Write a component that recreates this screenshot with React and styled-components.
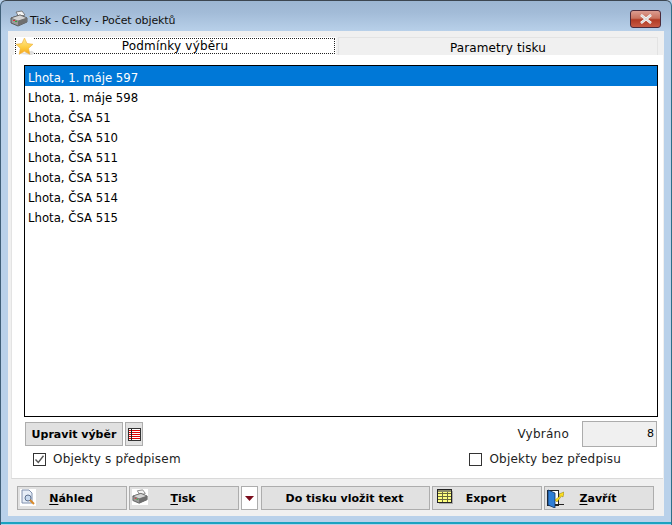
import styled, { createGlobalStyle } from "styled-components";

const Global = createGlobalStyle`
  html, body { margin: 0; padding: 0; background: #b9d1ea; }
  * { box-sizing: border-box; }
`;

const items = [
  "Lhota, 1. máje 597",
  "Lhota, 1. máje 598",
  "Lhota, ČSA 51",
  "Lhota, ČSA 510",
  "Lhota, ČSA 511",
  "Lhota, ČSA 513",
  "Lhota, ČSA 514",
  "Lhota, ČSA 515",
];

const PrinterIcon = ({ size = 18 }) => (
  <svg width={size} height={size} viewBox="0 0 18 18">
    <path d="M6 2 L12 1 L15 5 L9 7 Z" fill="#f4f4f4" stroke="#666" strokeWidth="0.8" />
    <path d="M1 8 L10 5 L17 8 L17 12 L8 16 L1 13 Z" fill="#9a9a9a" stroke="#444" strokeWidth="0.8" />
    <path d="M1 8 L8 11 L17 8 L10 5 Z" fill="#d4d4d4" stroke="#555" strokeWidth="0.6" />
    <path d="M8 11 L8 16 L17 12 L17 8 Z" fill="#6f6f6f" />
    <rect x="3" y="10" width="2" height="1" fill="#d33" />
    <rect x="5" y="11" width="2" height="1" fill="#3a3" />
  </svg>
);

const StarIcon = () => (
  <svg width="18" height="19" viewBox="0 0 17 18">
    <defs>
      <linearGradient id="star" x1="0" y1="0" x2="0" y2="1">
        <stop offset="0" stopColor="#ffec9a" />
        <stop offset="0.6" stopColor="#fdcb3e" />
        <stop offset="1" stopColor="#f5a21c" />
      </linearGradient>
    </defs>
    <path d="M3 16 L15 17 L18 15 L15 13 Z" fill="#dedede" />
    <path d="M8 1 L10.4 6.2 L16 6.9 L11.9 10.7 L13 16.4 L8 13.6 L3 16.4 L4.1 10.7 L0 6.9 L5.6 6.2 Z" fill="url(#star)" stroke="#eeb03a" strokeWidth="0.6" />
  </svg>
);

const PreviewIcon = () => (
  <svg width="16" height="17" viewBox="0 0 16 17">
    <path d="M2 1 H9 L12 4 V14 H2 Z" fill="#e6edf7" stroke="#8090ad" />
    <circle cx="8" cy="9" r="3" fill="#c6d8ee" stroke="#5d6f8e" />
    <path d="M10 11 L14 15" stroke="#d88a2a" strokeWidth="2" />
  </svg>
);

const TriangleIcon = () => (
  <svg width="9" height="5" viewBox="0 0 9 5">
    <path d="M0 0 H9 L4.5 5 Z" fill="#7a0c1c" />
  </svg>
);

const ListIcon = () => (
  <svg width="13" height="13" viewBox="0 0 13 13" shapeRendering="crispEdges">
    <rect x="0.5" y="0.5" width="12" height="12" fill="#fff" stroke="#333" />
    <path d="M1 2.5 H12 M1 4.5 H12 M1 6.5 H12 M1 8.5 H12 M1 10.5 H12" stroke="#e00000" strokeWidth="1" />
    <path d="M3.5 1 V12" stroke="#222" strokeWidth="1" />
  </svg>
);

const GridIcon = () => (
  <svg width="16" height="15" viewBox="0 0 16 15" shapeRendering="crispEdges">
    <rect x="2" y="2" width="14" height="13" fill="#aaa" />
    <rect x="0.5" y="0.5" width="14" height="13" fill="#ffff80" stroke="#222" />
    <path d="M1 4.5 H14 M1 7.5 H14 M1 10.5 H14 M5 1 V13 M10 1 V13" stroke="#6a6a3c" strokeWidth="1" />
    <rect x="1" y="1" width="13" height="2" fill="#8d8d6a" />
  </svg>
);

const DoorIcon = () => (
  <svg width="17" height="19" viewBox="0 0 17 19">
    <rect x="0.5" y="1.5" width="11" height="15" fill="#fff" stroke="#222" />
    <path d="M1 1 L8 4 V19 L1 16 Z" fill="#2f7fd6" stroke="#12315c" strokeWidth="0.8" />
    <path d="M8 11 L13 7 L12 5 L17 3 L16 8 L14.5 7 L10 13 Z" fill="#ffe020" stroke="#8a7a00" strokeWidth="0.5" />
    <path d="M8 15.5 H17" stroke="#222" strokeWidth="1" />
  </svg>
);

const CheckMark = () => (
  <svg width="11" height="11" viewBox="0 0 11 11">
    <path d="M1.5 5.5 L4.3 8.5 L9.5 1.8" fill="none" stroke="#555" strokeWidth="1.4" />
  </svg>
);

const CloseGlyph = () => (
  <svg width="14" height="10" viewBox="0 0 14 10">
    <path d="M2 1 L12 9 M12 1 L2 9" stroke="#fff" strokeWidth="2.6" />
    <path d="M2 1 L12 9 M12 1 L2 9" stroke="#d8d8d8" strokeWidth="1.2" />
  </svg>
);

const Underlined = styled.span`
  text-decoration: underline;
  text-underline-offset: 2px;
`;

const App = () => (
  <>
    <Global />
    <Window>
      <TitleBar>
        <TitleIcon>
          <PrinterIcon />
        </TitleIcon>
        <TitleText>Tisk - Celky - Počet objektů</TitleText>
        <CloseButton>
          <CloseGlyph />
        </CloseButton>
      </TitleBar>
      <Client>
        <TabRow>
          <ActiveTab>
            <TabStar>
              <StarIcon />
            </TabStar>
            <ActiveLabel>Podmínky výběru</ActiveLabel>
          </ActiveTab>
          <Tab>Parametry tisku</Tab>
        </TabRow>
        <Panel>
          <ListBox>
            {items.map((item, i) => (
              <ListRow key={item} $selected={i === 0}>
                {item}
              </ListRow>
            ))}
          </ListBox>
          <SelectRow>
            <SelectGroup>
              <FlatButton $width={98}>Upravit výběr</FlatButton>
              <IconButton>
                <ListIcon />
              </IconButton>
            </SelectGroup>
            <CountGroup>
              <CountLabel>Vybráno</CountLabel>
              <CountBox>8</CountBox>
            </CountGroup>
          </SelectRow>
          <CheckRow>
            <CheckItem>
              <CheckBox>
                <CheckMark />
              </CheckBox>
              Objekty s předpisem
            </CheckItem>
            <CheckItem>
              <CheckBox />
              Objekty bez předpisu
            </CheckItem>
          </CheckRow>
        </Panel>
        <ButtonBar>
          <BarButton $width={110}>
            <BarIcon $left={2} $white>
              <PreviewIcon />
            </BarIcon>
            <BarLabel><Underlined>N</Underlined>áhled</BarLabel>
          </BarButton>
          <BarButton $width={110}>
            <BarIcon $left={2} $white>
              <PrinterIcon size={16} />
            </BarIcon>
            <BarLabel><Underlined>T</Underlined>isk</BarLabel>
          </BarButton>
          <ArrowButton>
            <TriangleIcon />
          </ArrowButton>
          <BarButton $width={169} $gap={1}>
            <BarLabel>Do tisku vložit text</BarLabel>
          </BarButton>
          <BarButton $width={110}>
            <BarIcon $left={4}>
              <GridIcon />
            </BarIcon>
            <BarLabel>Export</BarLabel>
          </BarButton>
          <BarButton $width={110}>
            <BarIcon $left={2}>
              <DoorIcon />
            </BarIcon>
            <BarLabel><Underlined>Z</Underlined>avřít</BarLabel>
          </BarButton>
        </ButtonBar>
      </Client>
      <BottomEdge />
    </Window>
  </>
);

export default App;

const Window = styled.div`
  width: 672px;
  height: 525px;
  display: flex;
  flex-direction: column;
  overflow: hidden;
  border-radius: 6px 6px 0 0;
  border-top: 1px solid #3c4650;
  border-left: 1px solid #3f5f78;
  border-right: 1px solid #2f6f88;
  background: linear-gradient(to bottom, #9cb6d2 0, #a3bcd8 12px, #b9d1ea 31px);
  font-family: "DejaVu Sans", "Liberation Sans", sans-serif;
  font-size: 12px;
  color: #000;
`;

const TitleBar = styled.div`
  height: 30px;
  flex: none;
  display: flex;
  align-items: center;
  padding: 0 7px 0 9px;
`;

const TitleIcon = styled.div`
  width: 20px;
  display: flex;
  margin-top: 6px;
`;

const TitleText = styled.div`
  flex: 1;
  margin-top: 8px;
  font-size: 11px;
  letter-spacing: -0.1px;
  color: #111;
`;

const CloseButton = styled.div`
  width: 31px;
  height: 18px;
  margin: 6px 3px 0 0;
  display: flex;
  align-items: center;
  justify-content: center;
  border: 1px solid #4b2a3a;
  border-radius: 3px;
  background: linear-gradient(to bottom, #dc9c90 0, #c9735f 45%, #b13a24 55%, #c65a44 100%);
`;

const Client = styled.div`
  margin: 0 7px;
  height: 485px;
  flex: none;
  background: #f0f0f0;
  display: flex;
  flex-direction: column;
  padding: 6px 0 0 3px;
`;

const TabRow = styled.div`
  height: 18px;
  flex: none;
  display: flex;
  gap: 2px;
  padding-left: 3px;
`;

const ActiveTab = styled.div`
  position: relative;
  width: 322px;
  padding: 1px;
  background: #fff;
`;

const ActiveLabel = styled.div`
  height: 16px;
  line-height: 15px;
  text-align: center;
  letter-spacing: 0.2px;
  border: 1px dotted #222;
`;

const TabStar = styled.div`
  position: absolute;
  left: 2px;
  top: 0;
  display: flex;
  background: #fff;
`;

const Tab = styled.div`
  width: 320px;
  border: 1px solid #e3e3e3;
  border-bottom: none;
  line-height: 20px;
  text-align: center;
  letter-spacing: 0.1px;
  overflow: hidden;
`;

const Panel = styled.div`
  width: 652px;
  height: 424px;
  flex: none;
  background: #fff;
  border-bottom: 1px solid #d9d9d9;
  border-left: 1px solid #e3e3e3;
  padding: 10px 5px 0 12px;
  display: flex;
  flex-direction: column;
`;

const ListBox = styled.div`
  height: 352px;
  flex: none;
  border: 1px solid #000;
  background: #fff;
`;

const ListRow = styled.div`
  height: 20px;
  line-height: 24px;
  padding-left: 3px;
  font-size: 11.7px;
  background: ${(p) => (p.$selected ? "#0078d7" : "transparent")};
  color: ${(p) => (p.$selected ? "#fff" : "#000")};
`;

const SelectRow = styled.div`
  display: flex;
  justify-content: space-between;
  align-items: flex-start;
  margin-top: 4px;
`;

const SelectGroup = styled.div`
  display: flex;
  gap: 2px;
  padding: 1px 0 0 1px;
`;

const FlatButton = styled.div`
  width: ${(p) => p.$width}px;
  height: 24px;
  line-height: 23px;
  text-align: center;
  font-weight: 700;
  font-size: 11px;
  background: #e1e1e1;
  border: 1px solid #adadad;
`;

const IconButton = styled.div`
  width: 18px;
  height: 24px;
  display: flex;
  align-items: center;
  justify-content: center;
  background: #e1e1e1;
  border: 1px solid #adadad;
`;

const CountGroup = styled.div`
  display: flex;
  align-items: center;
  gap: 13px;
  margin-right: 1px;
`;

const CountLabel = styled.div`
  color: #222;
  letter-spacing: 0.25px;
`;

const CountBox = styled.div`
  width: 75px;
  height: 26px;
  line-height: 24px;
  font-size: 11px;
  text-align: right;
  padding-right: 2px;
  background: #f0f0f0;
  border: 1px solid #acacac;
`;

const CheckRow = styled.div`
  display: flex;
  justify-content: space-between;
  padding: 0 37px 0 9px;
  margin-top: 2px;
`;

const CheckItem = styled.div`
  display: flex;
  align-items: center;
  gap: 7px;
  height: 20px;
  color: #222;
  letter-spacing: 0.2px;
`;

const CheckBox = styled.div`
  width: 13px;
  height: 13px;
  display: flex;
  align-items: center;
  justify-content: center;
  background: #fff;
  border: 1px solid #333;
`;

const ButtonBar = styled.div`
  display: flex;
  gap: 2px;
  padding: 7px 0 0 6px;
`;

const BarButton = styled.div`
  position: relative;
  width: ${(p) => p.$width}px;
  height: 24px;
  margin-left: ${(p) => p.$gap || 0}px;
  display: flex;
  align-items: center;
  justify-content: center;
  background: #e1e1e1;
  border: 1px solid #adadad;
`;

const BarIcon = styled.div`
  position: absolute;
  left: ${(p) => p.$left}px;
  top: 2px;
  display: flex;
  background: ${(p) => (p.$white ? "#fff" : "transparent")};
`;

const BarLabel = styled.div`
  font-weight: 700;
  font-size: 11px;
  margin: 1px 2px 0 0;
`;

const ArrowButton = styled.div`
  width: 17px;
  height: 24px;
  display: flex;
  align-items: center;
  justify-content: center;
  background: #fff;
  border: 1px solid #adadad;
`;

const BottomEdge = styled.div`
  height: 8px;
  flex: none;
  margin: 0 -1px;
  border-bottom: 2px solid #1aa3c0;
`;
